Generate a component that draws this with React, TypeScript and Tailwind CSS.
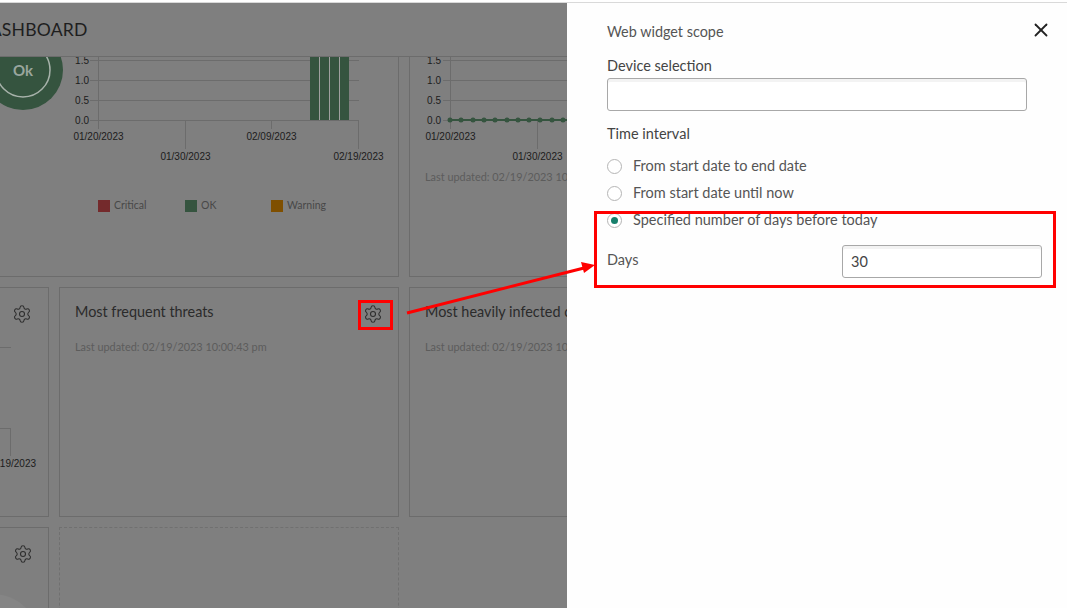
import { Settings, X } from "lucide-react";

const axisText = "font-['Liberation_Sans',Arial,sans-serif] text-[10px] fill-[#1c1c1c]";
const lastUpdated = "Last updated: 02/19/2023 10:00:43 pm";

function Gear() {
  return <Settings size={20} strokeWidth={1.3} className="text-[#2e2e2e]" />;
}

function AxisLabel({ x, y, children }: { x: number; y: number; children: string }) {
  return (
    <text x={x} y={y} textAnchor="middle" className={axisText}>
      {children}
    </text>
  );
}

function YLabels({ x }: { x: number }) {
  return (
    <>
      {[
        ["1.5", 64],
        ["1.0", 84],
        ["0.5", 104],
        ["0.0", 124],
      ].map(([label, y]) => (
        <text key={label} x={x} y={y} textAnchor="end" className={axisText}>
          {label}
        </text>
      ))}
    </>
  );
}

function StatusChart() {
  const legend = [
    { x: 98, color: "#742a2c", label: "Critical" },
    { x: 185, color: "#35543f", label: "OK" },
    { x: 271, color: "#7f4f00", label: "Warning" },
  ];
  return (
    <svg viewBox="-290 48 688 228" className="block h-[228px] w-[688px]">
      {/* status donut */}
      <circle cx="23" cy="70" r="40" fill="#35543f" />
      <circle cx="23" cy="70" r="27" fill="none" stroke="#a7b2aa" strokeWidth="1.5" />
      <text x="23" y="76" textAnchor="middle" className="fill-[#9aa69e] font-['Lato',sans-serif] text-[15px] font-bold">
        Ok
      </text>

      {[60, 80, 100, 120].map((y) => (
        <line key={y} x1="90" x2="359" y1={y + 0.5} y2={y + 0.5} stroke="#6c6c6c" />
      ))}
      <line x1="98.5" x2="98.5" y1="57" y2="129" stroke="#6c6c6c" />
      <line x1="185.5" x2="185.5" y1="120" y2="149" stroke="#6c6c6c" />
      <line x1="271.5" x2="271.5" y1="120" y2="129" stroke="#6c6c6c" />
      <line x1="358.5" x2="358.5" y1="120" y2="149" stroke="#6c6c6c" />
      <YLabels x={89} />

      <rect x="310" y="57" width="39" height="63" fill="#a0a0a0" />
      {[310, 320, 330, 340].map((x) => (
        <rect key={x} x={x} y="57" width="9" height="63" fill="#35543f" />
      ))}

      <AxisLabel x={98.5} y={140}>01/20/2023</AxisLabel>
      <AxisLabel x={185.5} y={160}>01/30/2023</AxisLabel>
      <AxisLabel x={271.5} y={140}>02/09/2023</AxisLabel>
      <AxisLabel x={358.5} y={160}>02/19/2023</AxisLabel>

      {legend.map((item) => (
        <g key={item.label}>
          <rect x={item.x} y="200" width="12" height="12" fill={item.color} />
          <text x={item.x + 16} y="209" className="fill-[#484848] font-['Lato',sans-serif] text-[10.5px]">
            {item.label}
          </text>
        </g>
      ))}
    </svg>
  );
}

function LineChart() {
  const points = [450, 461, 473, 484, 495, 507, 518, 529, 540, 552, 563, 574, 585, 596, 607, 618];
  return (
    <svg viewBox="410 48 338 120" className="block h-[120px] w-[338px]">
      {[60, 80, 100, 120].map((y) => (
        <line key={y} x1="443" x2="748" y1={y + 0.5} y2={y + 0.5} stroke="#6c6c6c" />
      ))}
      <line x1="450.5" x2="450.5" y1="57" y2="129" stroke="#6c6c6c" />
      <line x1="537.5" x2="537.5" y1="120" y2="149" stroke="#6c6c6c" />
      <YLabels x={441} />
      <line x1="450" x2="618" y1="120" y2="120" stroke="#35543f" strokeWidth="2" />
      {points.map((x) => (
        <circle key={x} cx={x} cy="120" r="2.5" fill="#35543f" />
      ))}
      <AxisLabel x={450.5} y={140}>01/20/2023</AxisLabel>
      <AxisLabel x={537.5} y={160}>01/30/2023</AxisLabel>
    </svg>
  );
}

function WidgetCard({ title }: { title: string }) {
  return (
    <div className="h-[230px] w-[340px] border border-[#6c6c6c] px-[15px] pt-[13px]">
      <div className="flex items-start justify-between">
        <h3 className="whitespace-nowrap text-[14.4px] leading-[22px] text-[#2b2b2b]">{title}</h3>
        <span className="mt-[3px]">
          <Gear />
        </span>
      </div>
      <p className="mt-[15px] text-[10.9px] leading-[16px] text-[#5c5c5c]">{lastUpdated}</p>
    </div>
  );
}

function RadioRow({ label, checked }: { label: string; checked?: boolean }) {
  return (
    <div className="flex h-[27px] items-center gap-[11px]">
      <span className="flex h-[15px] w-[15px] items-center justify-center rounded-full border border-[#b5b5b5] bg-white">
        {checked && <span className="h-[7px] w-[7px] rounded-full bg-[#167f6b]" />}
      </span>
      <span className="-translate-y-px text-[14.5px] text-[#555]">{label}</span>
    </div>
  );
}

function TextBox({ className, value }: { className: string; value?: string }) {
  return (
    <div
      className={`flex h-[33px] items-center rounded-[3px] border border-[#a8a8a8] bg-white px-[8px] text-[14.5px] text-[#444] shadow-[inset_0_3px_0_#f3f3f3] ${className}`}
    >
      {value}
    </div>
  );
}

export default function App() {
  return (
    <div className="relative h-[608px] w-[1067px] overflow-hidden bg-white font-['Lato','Open_Sans',sans-serif]">
      <div className="h-[3px] border-b border-[#d9d9d9]" />
      <div className="flex h-[605px]">
        {/* dimmed dashboard */}
        <div className="flex w-[567px] shrink-0 flex-col overflow-hidden bg-[#7f7f7f]">
          <header className="flex h-[54px] shrink-0 items-center border-b border-[#6c6c6c] pt-[2px]">
            <h1 className="-ml-[23.5px] text-[17.6px] tracking-[0.2px] text-[#1e1e1e]">DASHBOARD</h1>
          </header>
          <div className="flex-1 overflow-hidden">
            <div className="-ml-[291px] -mt-[10px] grid w-[1040px] grid-cols-[340px_340px_340px] gap-[10px]">
              <div className="col-span-2 h-[230px] border border-[#6c6c6c]">
                <StatusChart />
              </div>
              <div className="h-[230px] border border-[#6c6c6c]">
                <LineChart />
                <p className="mt-px px-[15px] text-[10.9px] leading-[16px] text-[#5c5c5c]">{lastUpdated}</p>
              </div>

              <div className="h-[230px] border border-[#6c6c6c] pl-[15px] pr-px pt-[16px]">
                <div className="flex justify-end pr-[15px]">
                  <Gear />
                </div>
                <svg viewBox="-275 324 322 190" className="block h-[190px] w-[322px]">
                  <line x1="-275" x2="11" y1="347.5" y2="347.5" stroke="#6c6c6c" />
                  <line x1="-275" x2="11" y1="428.5" y2="428.5" stroke="#6c6c6c" />
                  <line x1="10.5" x2="10.5" y1="428" y2="456" stroke="#6c6c6c" />
                  <AxisLabel x={11} y={467}>02/19/2023</AxisLabel>
                </svg>
              </div>
              <WidgetCard title="Most frequent threats" />
              <WidgetCard title="Most heavily infected computers" />

              <div className="relative h-[230px] overflow-hidden border border-[#6c6c6c] pl-[15px] pr-[15px] pt-[16px]">
                <div className="flex justify-end">
                  <Gear />
                </div>
                <div className="absolute left-[237px] top-[66px] h-[92px] w-[92px] rounded-full bg-[#858585]" />
              </div>
              <div className="h-[230px] border border-dashed border-[#707070]" />
            </div>
          </div>
        </div>

        {/* scope panel */}
        <aside className="relative flex-1 bg-[#fefefe] pl-[40px] pr-[25px] pt-[18px] text-[#3d3d3d]">
          <h2 className="text-[14.4px] leading-[22px] text-[#555]">Web widget scope</h2>
          <button className="absolute right-[15px] top-[16px] text-[#222]">
            <X size={22} strokeWidth={2} />
          </button>
          <label className="mt-[12px] block text-[14.5px] leading-[21px] text-[#444]">Device selection</label>
          <TextBox className="mt-[2px] w-[420px]" />
          <label className="mt-[12px] block text-[14.5px] leading-[21px] text-[#444]">Time interval</label>
          <div className="mt-[9px]">
            <RadioRow label="From start date to end date" />
            <RadioRow label="From start date until now" />
            <RadioRow label="Specified number of days before today" checked />
          </div>
          <div className="mt-[11px] flex items-center justify-between">
            <span className="-translate-y-[2px] text-[14.5px] text-[#555]">Days</span>
            <TextBox className="w-[200px]" value="30" />
          </div>
        </aside>
      </div>

      {/* red callouts */}
      <div className="absolute left-[358px] top-[300px] h-[30px] w-[35px] border-[3px] border-[#f00]" />
      <div className="absolute left-[594px] top-[211px] h-[77px] w-[462px] border-[3px] border-[#f00]" />
      <svg className="absolute inset-0 h-[608px] w-[1067px]" viewBox="0 0 1067 608">
        <line x1="407" y1="313" x2="584" y2="268" stroke="#f00" strokeWidth="3" />
        <polygon points="595,265 581,262 584,273" fill="#f00" />
      </svg>
    </div>
  );
}
